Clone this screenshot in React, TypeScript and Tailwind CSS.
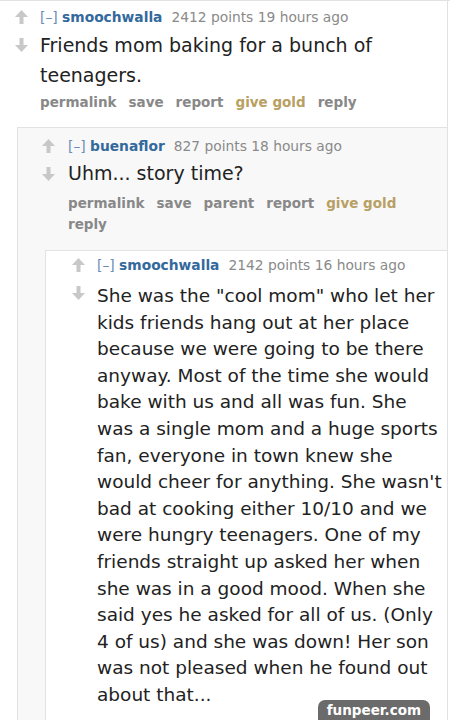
import React from 'react';

const Arrows: React.FC = () => (
  <div className="flex flex-col items-center gap-[14px] pt-[1px] w-[13px] shrink-0">
    <svg width="13" height="14" viewBox="0 0 13 14"><path d="M6.5 0 L13 7 H8.5 V14 H4.5 V7 H0 Z" fill="#c8c8c8" /></svg>
    <svg width="13" height="14" viewBox="0 0 13 14"><path d="M6.5 14 L13 7 H8.5 V0 H4.5 V7 H0 Z" fill="#c8c8c8" /></svg>
  </div>
);

const Header: React.FC<{ author: string; meta: string }> = ({ author, meta }) => (
  <div className="text-[13.8px] leading-[16px] font-['DejaVu_Sans',sans-serif] whitespace-nowrap">
    <span className="text-[#6a8cb8]">[–] </span>
    <span className="text-[#33699c] font-bold">{author}</span>
    <span className="text-[#8a8a8a] ml-[9px]">{meta}</span>
  </div>
);

const Links: React.FC<{ items: string[]; className?: string }> = ({ items, className }) => (
  <div className={`flex flex-wrap gap-x-[12px] text-[13.5px] leading-[21px] font-bold text-[#888] font-['DejaVu_Sans',sans-serif] ${className ?? ''}`}>
    {items.map(i => (
      <span key={i} className={i === 'give gold' ? 'text-[#b8a063]' : ''}>{i}</span>
    ))}
  </div>
);

export default function App() {
  return (
    <div className="w-[450px] h-[720px] bg-white overflow-hidden relative border-t border-[#e2e2e2]">
      <div className="mr-[2px] border-r border-[#e2e2e2] h-full">
        {/* top comment */}
        <div className="flex gap-[12px] pl-[15px] pt-[8px]">
          <Arrows />
          <div className="flex-1">
            <Header author="smoochwalla" meta="2412 points 19 hours ago" />
            <p className="text-[19px] leading-[30px] text-[#222] font-['DejaVu_Sans',sans-serif] mt-[5px] pr-[70px]">
              Friends mom baking for a bunch of teenagers.
            </p>
            <Links items={['permalink', 'save', 'report', 'give gold', 'reply']} className="mt-[2px]" />
          </div>
        </div>

        {/* second comment */}
        <div className="ml-[17px] mt-[14px] bg-[#f8f8f8] border-l border-t border-[#e2e2e2] pl-[24px] pt-[10px] h-full">
          <div className="flex gap-[13px]">
            <Arrows />
            <div className="flex-1">
              <Header author="buenaflor" meta="827 points 18 hours ago" />
              <p className="text-[19px] leading-[29px] text-[#222] font-['DejaVu_Sans',sans-serif] mt-[5px]">
                Uhm... story time?
              </p>
              <Links items={['permalink', 'save', 'parent', 'report', 'give gold', 'reply']} className="mt-[5px] pr-[30px]" />
            </div>
          </div>

          {/* third comment */}
          <div className="ml-[3px] mt-[15px] bg-white border-l border-t border-[#e2e2e2] pl-[26px] pt-[6px] h-full">
            <div className="flex gap-[12px]">
              <Arrows />
              <div className="flex-1">
                <Header author="smoochwalla" meta="2142 points 16 hours ago" />
                <p className="text-[18.5px] leading-[26.6px] text-[#222] font-['DejaVu_Sans',sans-serif] mt-[10px] pr-[1px]">
                  She was the "cool mom" who let her kids friends hang out at her place because we were going to be there anyway. Most of the time she would bake with us and all was fun. She was a single mom and a huge sports fan, everyone in town knew she would cheer for anything. She wasn't bad at cooking either 10/10 and we were hungry teenagers. One of my friends straight up asked her when she was in a good mood. When she said yes he asked for all of us. (Only 4 of us) and she was down! Her son was not pleased when he found out about that...
                </p>
              </div>
            </div>
          </div>
        </div>
      </div>

      <div className="absolute right-[20px] bottom-0 bg-[#6b6b6b] text-white text-[13.5px] font-bold leading-[20px] px-[9px] rounded-t-[7px] font-['DejaVu_Sans',sans-serif]">
        funpeer.com
      </div>
    </div>
  );
}
